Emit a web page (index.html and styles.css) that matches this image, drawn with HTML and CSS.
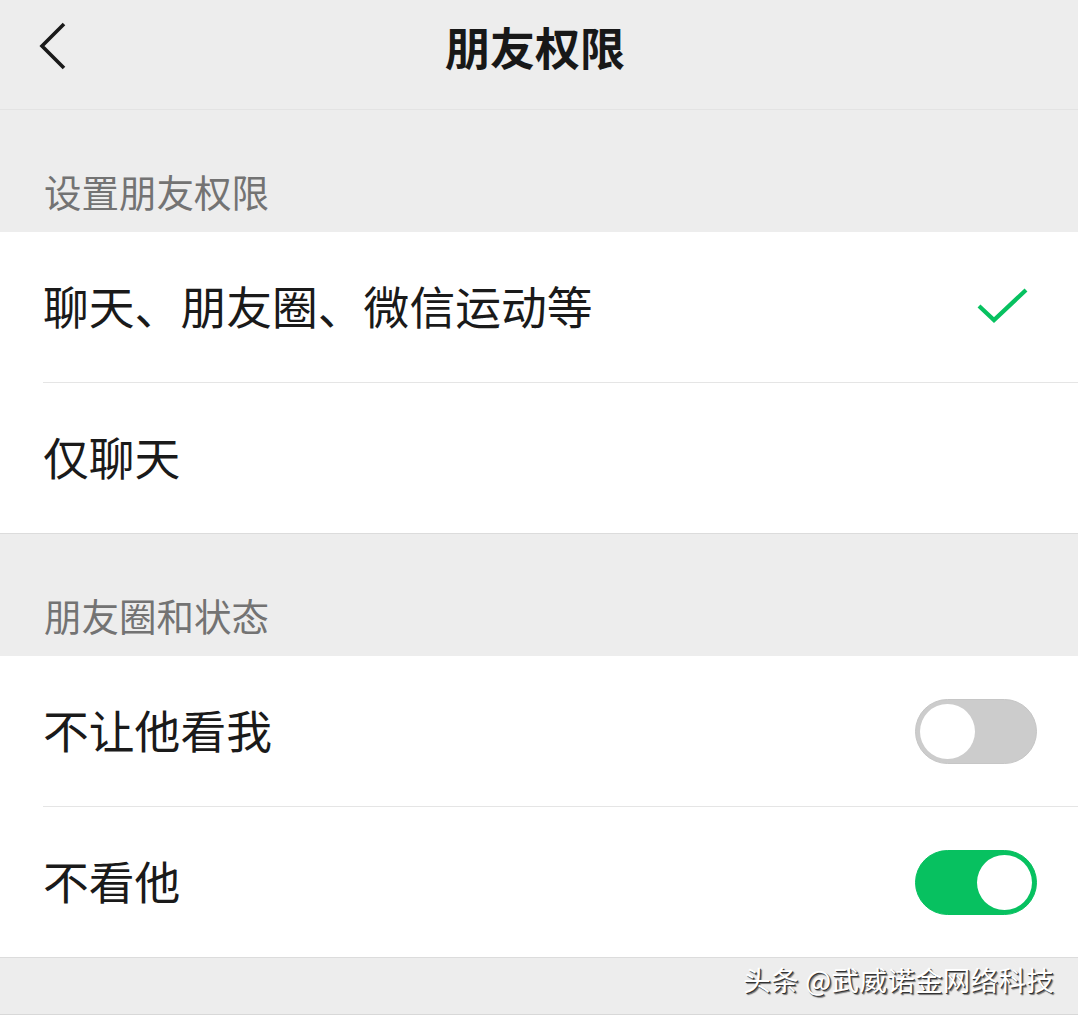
FILE: index.html
```html
<!DOCTYPE html>
<html lang="zh-CN">
<head>
<meta charset="utf-8">
<title>朋友权限</title>
<link rel="stylesheet" href="styles.css">
</head>
<body>
<div class="page">
  <header class="nav">
    <div class="nav-left">
      <svg class="back" width="30" height="50" viewBox="0 0 30 50"><path d="M26 3 L4 25 L26 47" fill="none" stroke="#1a1a1a" stroke-width="3.6" stroke-linecap="butt" stroke-linejoin="miter"/></svg>
    </div>
    <h1 class="title">朋友权限</h1>
    <div class="nav-right"></div>
  </header>

  <div class="section-label">设置朋友权限</div>
  <div class="group">
    <div class="row">
      <span class="row-text">聊天、朋友圈、微信运动等</span>
      <svg class="check" width="56" height="44" viewBox="0 0 56 44"><path d="M4 19 L19 33 L51 3" fill="none" stroke="#07c160" stroke-width="4.2"/></svg>
    </div>
    <div class="row">
      <span class="row-text">仅聊天</span>
    </div>
  </div>

  <div class="section-label">朋友圈和状态</div>
  <div class="group">
    <div class="row">
      <span class="row-text">不让他看我</span>
      <span class="switch"><span class="knob"></span></span>
    </div>
    <div class="row">
      <span class="row-text">不看他</span>
      <span class="switch on"><span class="knob"></span></span>
    </div>
  </div>

  <footer class="footer">
    <span class="watermark">头条 @武威诺金网络科技</span>
  </footer>
</div>
</body>
</html>
```

FILE: styles.css
```css
html, body {
  margin: 0;
  padding: 0;
  background: #ededed;
}
.page {
  width: 1078px;
  height: 1015px;
  overflow: hidden;
  font-family: "Noto Sans CJK SC", "Noto Sans", sans-serif;
  color: #1a1a1a;
}
.nav {
  height: 109px;
  border-bottom: 1px solid #e3e3e3;
  display: grid;
  grid-template-columns: 1fr auto 1fr;
  align-items: center;
}
.nav-left {
  display: flex;
  align-items: center;
  padding-left: 38px;
  padding-bottom: 18px;
}
.back {
  display: block;
}
.title {
  margin: 0 8px 0 0;
  font-size: 45px;
  font-weight: 700;
  line-height: 60px;
  letter-spacing: 0;
  padding-bottom: 16px;
  color: #181818;
}
.section-label {
  height: 122px;
  box-sizing: border-box;
  display: flex;
  align-items: flex-end;
  padding-left: 44px;
  padding-bottom: 20px;
  font-size: 37.5px;
  line-height: 42px;
  color: #737373;
}
.group {
  background: #ffffff;
  border-bottom: 1px solid #dcdcdc;
}
.row {
  height: 150px;
  margin-left: 43px;
  padding-right: 41px;
  display: flex;
  align-items: center;
  justify-content: space-between;
}
.row + .row {
  border-top: 1px solid #e5e5e5;
}
.row-text {
  font-size: 45.8px;
  line-height: 60px;
  color: #1a1a1a;
  margin-top: -4px;
}
.check {
  display: block;
  margin-right: 6px;
  margin-top: 4px;
}
.switch {
  width: 122px;
  height: 65px;
  box-sizing: border-box;
  border-radius: 33px;
  background: #cccccc;
  border: 1px solid #c6c6c6;
  position: relative;
  display: block;
  margin-right: 0;
  margin-top: 1px;
}
.knob {
  position: absolute;
  top: 4px;
  left: 4px;
  width: 55px;
  height: 55px;
  border-radius: 50%;
  background: #ffffff;
}
.switch.on {
  background: #07c160;
  border-color: #07c160;
}
.switch.on .knob {
  left: auto;
  right: 4px;
}
.footer {
  height: 56px;
  border-bottom: 1px solid #d8d8d8;
  display: flex;
  justify-content: flex-end;
  align-items: flex-start;
  padding-right: 22px;
}
.watermark {
  font-size: 27.5px;
  line-height: 36px;
  margin-top: 3px;
  margin-right: 2px;
  letter-spacing: 0.3px;
  color: #ffffff;
  text-shadow: 1px 1px 0 #333, 2px 2px 1px rgba(0,0,0,0.5);
}
```
